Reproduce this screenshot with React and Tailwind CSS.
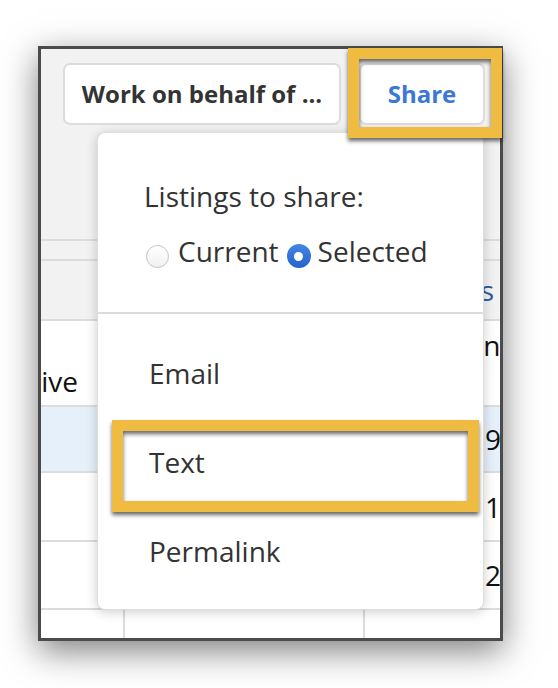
import React from "react";

function Radio({ checked }) {
  if (checked) {
    return (
      <span className="mt-[11px] flex h-[24px] w-[24px] shrink-0 items-center justify-center rounded-full bg-gradient-to-b from-[#4486e3] to-[#2462cd]">
        <span className="h-[9px] w-[9px] rounded-full bg-white" />
      </span>
    );
  }
  return (
    <span className="mt-[12px] h-[23px] w-[23px] shrink-0 rounded-full border border-[#c4c4c4] bg-gradient-to-b from-white to-[#f1f1f1]" />
  );
}

function MenuItem({ children }) {
  return (
    <div className="flex h-[89px] items-center pl-[51px] text-[28px] leading-[36px] text-[#333]">
      {children}
    </div>
  );
}

const rows = [
  { bg: "bg-[#e6f0fa]", h: "h-[66px]", value: "95,000" },
  { bg: "bg-white", h: "h-[69px]", value: "125,000" },
  { bg: "bg-white", h: "h-[68px]", value: "250,000" },
  { bg: "bg-white", h: "h-[40px]", value: "" },
];

export default function App() {
  return (
    <div className="relative h-[688px] w-[558px] bg-white pl-[38px] pt-[46px] font-['Open_Sans',sans-serif]">
      {/* window frame */}
      <div className="relative flex h-[595px] w-[465px] flex-col overflow-hidden border-[3px] border-[#4b4b4b] bg-[#f2f2f2] shadow-[0_10px_32px_rgba(0,0,0,0.5)]">
        {/* toolbar */}
        <div className="flex h-[190px] shrink-0 items-start gap-[18px] pl-[22px] pt-[14px]">
          <button className="flex h-[62px] w-[278px] items-center justify-center rounded-[7px] border-2 border-[#dcdcdc] bg-white text-[24px] font-bold text-[#333]">
            Work on behalf of ...
          </button>
          <button className="flex h-[62px] w-[126px] items-center justify-center rounded-[7px] border-2 border-[#dcdcdc] bg-white text-[24px] font-bold text-[#3a78d4]">
            Share
          </button>
        </div>

        {/* table */}
        <div className="h-[20px] shrink-0 border-t-2 border-[#dcdcdc]" />
        <div className="flex h-[60px] shrink-0 items-center justify-end border-t-2 border-[#dcdcdc] pr-[6px] text-[28px] text-[#2a5aa0]">
          Columns
        </div>
        <div className="grid h-[86px] shrink-0 grid-cols-[82px_240px_137px] border-t-2 border-[#dcdcdc] bg-white text-[28px] leading-[36px] text-[#111]">
          <div className="flex items-end justify-end overflow-hidden whitespace-nowrap pb-[6px] pr-[45px]">
            Representative
          </div>
          <div className="border-l-2 border-[#dcdcdc]" />
          <div className="overflow-hidden whitespace-nowrap border-l-2 border-[#dcdcdc] pl-[86px] pt-[6px]">
            Min
          </div>
        </div>
        {rows.map((r, i) => (
          <div
            key={i}
            className={`grid shrink-0 grid-cols-[82px_240px_137px] border-t-2 border-[#dcdcdc] text-[28px] leading-[36px] text-[#111] ${r.bg} ${r.h}`}
          >
            <div />
            <div className="border-l-2 border-[#dcdcdc]" />
            <div className="flex items-center overflow-hidden whitespace-nowrap border-l-2 border-[#dcdcdc] pl-[120px]">
              {r.value}
            </div>
          </div>
        ))}

        {/* share menu */}
        <div className="absolute left-[56px] top-[83px] flex h-[478px] w-[387px] flex-col rounded-[8px] border border-[#dedede] bg-white shadow-[0_2px_12px_rgba(0,0,0,0.2)]">
          <div className="h-[179px] shrink-0 pl-[46px] pt-[45px] text-[28px] leading-[36px] text-[#333]">
            <div>Listings to share:</div>
            <div className="mt-[19px] flex items-start pl-[2px]">
              <Radio />
              <span className="ml-[9px]">Current</span>
              <span className="ml-[8px] flex">
                <Radio checked />
              </span>
              <span className="ml-[7px]">Selected</span>
            </div>
          </div>
          <div className="h-[2px] shrink-0 bg-[#dcdcdc]" />
          <div className="pt-[14px]">
            <MenuItem>Email</MenuItem>
            <MenuItem>Text</MenuItem>
            <MenuItem>Permalink</MenuItem>
          </div>

          {/* callout around the Text option */}
          <div className="absolute left-[14px] top-[287px] h-[92px] w-[367px] border-[11px] border-[#efbb41] shadow-[0_3px_4px_rgba(0,0,0,0.6),inset_0_3px_4px_rgba(0,0,0,0.6)]" />
        </div>
      </div>

      {/* callout around the Share button */}
      <div className="absolute left-[348px] top-[48px] h-[90px] w-[154px] border-[11px] border-[#efbb41] shadow-[0_3px_4px_rgba(0,0,0,0.6),inset_0_3px_4px_rgba(0,0,0,0.6)]" />
    </div>
  );
}
